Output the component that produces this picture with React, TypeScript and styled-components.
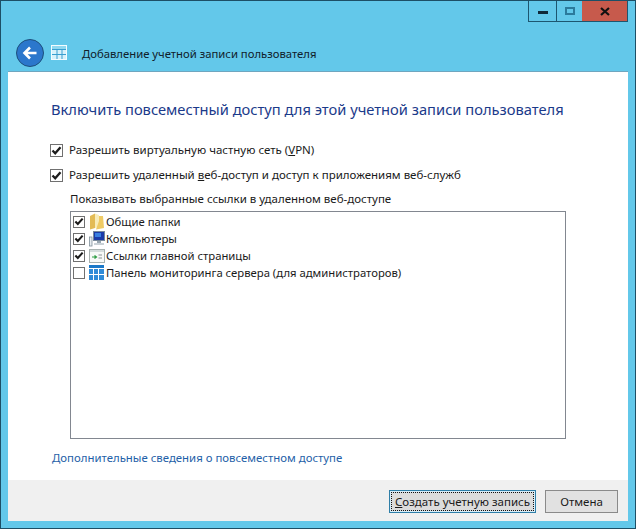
import React from "react";
import styled, { createGlobalStyle } from "styled-components";

const GlobalStyle = createGlobalStyle`
  html, body {
    margin: 0;
    padding: 0;
    background: #63c8ea;
  }
  * {
    box-sizing: border-box;
  }
`;

const FONT = `"Noto Sans", "Open Sans", sans-serif`;

const listItems = [
  { label: "Общие папки", checked: true, icon: "folder" },
  { label: "Компьютеры", checked: true, icon: "computer" },
  { label: "Ссылки главной страницы", checked: true, icon: "links" },
  { label: "Панель мониторинга сервера (для администраторов)", checked: false, icon: "dashboard" },
];

const CheckMark = () => (
  <svg width="11" height="11" viewBox="0 0 11 11">
    <path d="M1.5 5.5 L4.2 8.3 L9.5 2.3" fill="none" stroke="#1c1c1c" strokeWidth="2.3" />
  </svg>
);

const FolderIcon = () => (
  <svg width="16" height="17" viewBox="0 0 16 17">
    <path d="M1 3 L6 0.5 L6 15 L1 16.5 Z" fill="#e3bb55" />
    <path d="M6 0.5 L10 2 L10 14 L6 15 Z" fill="#f8ecb8" />
    <path d="M10 3 L14 3 L15 15 L7 16.5 L10 8 Z" fill="#efcb66" />
  </svg>
);

const ComputerIcon = () => (
  <svg width="16" height="17" viewBox="0 0 16 17">
    <rect x="0.5" y="7" width="2.5" height="9" fill="#e8edf0" stroke="#7f8f9a" strokeWidth="0.8" />
    <rect x="4.5" y="1.5" width="11" height="9" fill="#1b3aa8" stroke="#78899a" />
    <rect x="6" y="3" width="6" height="4" fill="#3a7fe0" />
    <rect x="8" y="11" width="4" height="2" fill="#98a6b0" />
    <rect x="5" y="13" width="10" height="2" fill="#c9d1d6" />
  </svg>
);

const LinksIcon = () => (
  <svg width="16" height="16" viewBox="0 0 16 16">
    <rect x="0.5" y="1.5" width="15" height="13" fill="#f7f9f7" stroke="#a8b2b0" />
    <rect x="1" y="2" width="14" height="2" fill="#d5dcdc" />
    <path d="M3 9 H7 M5.5 7.5 L7.5 9 L5.5 10.5" fill="none" stroke="#2f9e44" strokeWidth="1.2" />
    <path d="M9.5 7 H13 M9.5 10 H13" stroke="#8a9295" strokeWidth="1" />
  </svg>
);

const DashboardIcon = () => (
  <svg width="16" height="16" viewBox="0 0 16 16">
    <rect x="0" y="0" width="15" height="3" fill="#1b78c8" />
    <rect x="0" y="4" width="4" height="5" fill="#2f8bd8" />
    <rect x="5" y="4" width="4" height="5" fill="#2f8bd8" />
    <rect x="10" y="4" width="5" height="5" fill="#2f8bd8" />
    <rect x="0" y="10" width="4" height="5" fill="#2f8bd8" />
    <rect x="5" y="10" width="4" height="5" fill="#2f8bd8" />
    <rect x="10" y="10" width="5" height="5" fill="#2f8bd8" />
  </svg>
);

const icons: Record<string, React.ReactNode> = {
  folder: <FolderIcon />,
  computer: <ComputerIcon />,
  links: <LinksIcon />,
  dashboard: <DashboardIcon />,
};

export default function App() {
  return (
    <>
      <GlobalStyle />
      <Window>
        <TitleBar>
          <CaptionButton $width={28}>
            <MinGlyph />
          </CaptionButton>
          <CaptionButton $width={26}>
            <MaxGlyph />
          </CaptionButton>
          <CloseButton>
            <svg width="10" height="9" viewBox="0 0 10 9">
              <path d="M1 1 L9 8 M9 1 L1 8" stroke="#111" strokeWidth="2.2" />
            </svg>
          </CloseButton>
        </TitleBar>
        <NavBar>
          <BackButton>
            <svg width="20" height="20" viewBox="0 0 20 20">
              <path d="M16.5 10 H5 M10 4.5 L4.5 10 L10 15.5" fill="none" stroke="#fff" strokeWidth="2.6" />
            </svg>
          </BackButton>
          <NavIcon>
            <svg width="17" height="16" viewBox="0 0 17 16">
              <rect x="0.5" y="0.5" width="15" height="14" fill="#d8f2fb" stroke="#f4fcff" />
              <rect x="1" y="1" width="14" height="3" fill="#8fd8f0" />
              <path d="M1 4.5 H15 M1 9.5 H15 M6 4.5 V14 M11 4.5 V14" stroke="#3a9fd0" strokeWidth="1" />
            </svg>
          </NavIcon>
          <NavTitle>Добавление учетной записи пользователя</NavTitle>
        </NavBar>
        <Panel>
          <Body>
            <Heading>Включить повсеместный доступ для этой учетной записи пользователя</Heading>
            <OptionRow $top={22}>
              <CheckBox $size={13}>
                <CheckMark />
              </CheckBox>
              <OptionLabel>
                Разрешить виртуальную частную сеть (<u>V</u>PN)
              </OptionLabel>
            </OptionRow>
            <OptionRow $top={9}>
              <CheckBox $size={13}>
                <CheckMark />
              </CheckBox>
              <OptionLabel>
                Разрешить удаленный <u>в</u>еб-доступ и доступ к приложениям веб-служб
              </OptionLabel>
            </OptionRow>
            <ListCaption>Показывать выбранные ссылки в удаленном веб-доступе</ListCaption>
            <ListBox>
              {listItems.map((item) => (
                <ListRow key={item.label}>
                  <CheckBox $size={12}>{item.checked && <CheckMark />}</CheckBox>
                  <ItemIcon>{icons[item.icon]}</ItemIcon>
                  <ItemLabel>{item.label}</ItemLabel>
                </ListRow>
              ))}
            </ListBox>
            <MoreLink>Дополнительные сведения о повсеместном доступе</MoreLink>
          </Body>
          <Footer>
            <PrimaryButton>
              <FocusRing>
                <u>С</u>оздать учетную запись
              </FocusRing>
            </PrimaryButton>
            <CancelButton>Отмена</CancelButton>
          </Footer>
        </Panel>
      </Window>
    </>
  );
}

const Window = styled.div`
  display: flex;
  flex-direction: column;
  width: 636px;
  height: 529px;
  padding: 0 7px 7px 7px;
  background: #63c8ea;
  border: 1px solid #1d4f66;
  font-family: ${FONT};
  font-size: 11.5px;
  color: #1a1a1a;
  overflow: hidden;
`;

const TitleBar = styled.div`
  display: flex;
  justify-content: flex-end;
  height: 21px;
`;

const CaptionButton = styled.div<{ $width: number }>`
  display: flex;
  align-items: center;
  justify-content: center;
  width: ${(p) => p.$width}px;
  height: 21px;
  border-left: 1px solid #1d5670;
  border-bottom: 1px solid #1d5670;
`;

const MinGlyph = styled.div`
  width: 10px;
  height: 3px;
  margin-top: 3px;
  background: #0f2a3a;
`;

const MaxGlyph = styled.div`
  width: 10px;
  height: 8px;
  border: 2px solid #2b7a9c;
`;

const CloseButton = styled.div`
  display: flex;
  align-items: center;
  justify-content: center;
  width: 46px;
  height: 21px;
  background: #c75a4c;
  border-right: 1px solid #1d5670;
  border-bottom: 1px solid #1d5670;
`;

const NavBar = styled.div`
  display: flex;
  align-items: center;
  height: 50px;
  padding: 12px 0 0 8px;
`;

const BackButton = styled.div`
  display: flex;
  align-items: center;
  justify-content: center;
  width: 28px;
  height: 28px;
  border-radius: 50%;
  background: #2b77cc;
  border: 1px solid #1d4f7c;
`;

const NavIcon = styled.div`
  display: flex;
  margin-left: 7px;
`;

const NavTitle = styled.div`
  margin-left: 14px;
  font-size: 11.3px;
  color: #10202a;
  white-space: nowrap;
`;

const Panel = styled.div`
  display: flex;
  flex: 1;
  flex-direction: column;
  background: #fff;
  box-shadow: 0 -1px 0 #6fa6bf;
`;

const Body = styled.div`
  display: flex;
  flex: 1;
  flex-direction: column;
  padding: 26px 0 0 42px;
`;

const Heading = styled.div`
  height: 22px;
  margin-left: 1px;
  font-size: 14.7px;
  line-height: 22px;
  color: #1b3a8a;
  white-space: nowrap;
`;

const OptionRow = styled.div<{ $top: number }>`
  display: flex;
  align-items: center;
  height: 16px;
  margin-top: ${(p) => p.$top}px;
`;

const CheckBox = styled.div<{ $size: number }>`
  display: flex;
  flex: none;
  align-items: center;
  justify-content: center;
  width: ${(p) => p.$size}px;
  height: ${(p) => p.$size}px;
  background: #fff;
  border: 1px solid #707070;
`;

const OptionLabel = styled.div`
  margin-left: 6px;
  line-height: 16px;
  white-space: nowrap;
`;

const ListCaption = styled.div`
  margin: 8px 0 0 20px;
  font-size: 11.5px;
  line-height: 16px;
  white-space: nowrap;
`;

const ListBox = styled.div`
  display: flex;
  flex-direction: column;
  width: 496px;
  height: 228px;
  margin: 4px 0 0 20px;
  padding: 1px 0 0 2px;
  border: 1px solid #828790;
`;

const ListRow = styled.div`
  display: flex;
  align-items: center;
  height: 17px;
`;

const ItemIcon = styled.div`
  display: flex;
  width: 17px;
  margin-left: 4px;
`;

const ItemLabel = styled.div`
  font-size: 11.3px;
  white-space: nowrap;
`;

const MoreLink = styled.div`
  margin: 11px 0 0 2px;
  font-size: 11.4px;
  line-height: 16px;
  color: #1f5fa8;
  white-space: nowrap;
`;

const Footer = styled.div`
  display: flex;
  flex: none;
  justify-content: flex-end;
  gap: 9px;
  height: 41px;
  padding: 10px 10px 0 0;
  background: #f0f0f0;
`;

const PrimaryButton = styled.div`
  width: 147px;
  height: 23px;
  padding: 1px;
  background: #dcdcdc;
  border: 1px solid #2f7fa8;
  box-shadow: inset 0 0 0 1px #d8eefa;
`;

const FocusRing = styled.div`
  display: flex;
  align-items: center;
  justify-content: center;
  height: 100%;
  border: 1px dotted #111;
  white-space: pre;
`;

const CancelButton = styled.div`
  display: flex;
  align-items: center;
  justify-content: center;
  width: 73px;
  height: 23px;
  background: #e1e1e1;
  border: 1px solid #8a8a8a;
`;
